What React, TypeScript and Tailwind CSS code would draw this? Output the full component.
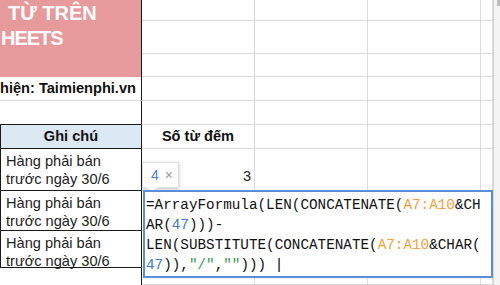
import React from "react";

const G = "border-[#dadada]";

function Cell({ className = "", children }: { className?: string; children?: React.ReactNode }) {
  return <div className={`border-r border-b ${G} ${className}`}>{children}</div>;
}

export default function App() {
  const cells: React.ReactNode[] = [];
  cells.push(
    <div key="pink" className="row-span-3 bg-[#e79a9b] border-r border-r-[#1a1a1a] overflow-hidden text-white font-bold text-[20px] leading-[25px]">
      <div className="pl-[8px] pt-[1px] whitespace-nowrap">TỪ TRÊN</div>
      <div className="pl-[1px] whitespace-nowrap tracking-[-1px]">HEETS</div>
    </div>
  );
  for (let i = 0; i < 4; i++) cells.push(<Cell key={`r1c${i}`} />);
  cells.push(
    <div key="scroll" className="row-span-10 bg-[#f4f4f4] border-l border-[#d6d6d6] flex flex-col">
      <div className="h-[6px] bg-[#bdbdbd] ml-[3px]" />
    </div>
  );
  for (let r = 2; r <= 3; r++) for (let i = 0; i < 4; i++) cells.push(<Cell key={`r${r}c${i}`} />);
  cells.push(
    <div key="r4c0" className={`border-b ${G} border-r border-r-[#1a1a1a] flex items-center overflow-hidden`}>
      <span className="font-bold text-[14.6px] whitespace-nowrap text-[#111]">hiện: Taimienphi.vn</span>
    </div>
  );
  for (let i = 0; i < 4; i++) cells.push(<Cell key={`r4c${i + 1}`} />);
  cells.push(<div key="r5c0" className="border-b border-r border-[#1a1a1a]" />);
  for (let i = 0; i < 4; i++) cells.push(<Cell key={`r5c${i + 1}`} />);
  cells.push(
    <div key="r6c0" className="bg-[#dde8f5] border-l border-b border-r border-[#1a1a1a] flex items-center justify-center font-bold text-[14.6px] text-[#111]">
      Ghi chú
    </div>
  );
  cells.push(
    <Cell key="r6c1" className="flex items-center justify-center font-bold text-[14.6px] text-[#111]">
      Số từ đếm
    </Cell>
  );
  for (let i = 0; i < 3; i++) cells.push(<Cell key={`r6c${i + 2}`} />);
  for (let r = 7; r <= 9; r++) {
    cells.push(
      <div key={`r${r}c0`} className="border-l border-b border-r border-[#1a1a1a] pl-[5px] pt-[3px] text-[14.6px] leading-[18px] text-[#222]">
        <div>Hàng phải bán</div>
        <div>trước ngày 30/6</div>
      </div>
    );
    cells.push(
      <Cell key={`r${r}c1`} className="flex items-end justify-end pr-[3px] pb-[2px] text-[14.6px] text-[#222]">
        {r === 7 ? "3" : ""}
      </Cell>
    );
    for (let i = 0; i < 3; i++) cells.push(<Cell key={`r${r}c${i + 2}`} />);
  }
  cells.push(<div key="r10c0" className="border-r border-[#1a1a1a]" />);
  for (let i = 0; i < 4; i++) cells.push(<Cell key={`r10c${i + 1}`} />);

  const O = "text-[#eea23c]";
  const B = "text-[#3b78c9]";
  const Gr = "text-[#3a9a5b]";

  return (
    <div className="relative w-[500px] h-[285px] overflow-hidden bg-white font-['Liberation_Sans',Arial,sans-serif]">
      <div className="grid grid-cols-[142px_113px_113px_113px_12px_7px] grid-rows-[21px_33px_23px_24px_24px_24px_42px_40px_37px_17px] h-[285px]">
        {cells}
      </div>

      <div className="absolute left-[142px] top-[162px] w-[37px] h-[26px] bg-white border border-[#e0e0e0] shadow-[0_1px_3px_rgba(0,0,0,0.25)] flex items-center pl-[8px] gap-[6px] text-[14px]">
        <span className="text-[#4a80d0]">4</span>
        <span className="text-[#9a9a9a]">×</span>
        <div className="absolute left-[5px] bottom-[-5px] w-[8px] h-[8px] bg-white border-r border-b border-[#e0e0e0] rotate-45" />
      </div>

      <div className="absolute left-[143px] top-[190px] w-[350px] h-[88px] bg-white border-2 border-[#5b8dd9] pl-[1px] pt-[3px] font-['Liberation_Mono',monospace] text-[14.3px] leading-[20px] text-[#111] whitespace-pre">
        <div>
          =ArrayFormula(LEN(CONCATENATE(<span className={O}>A7:A10</span>&amp;CH
        </div>
        <div>
          AR(<span className={B}>47</span>)))-
        </div>
        <div>
          LEN(SUBSTITUTE(CONCATENATE(<span className={O}>A7:A10</span>&amp;CHAR(
        </div>
        <div>
          <span className={B}>47</span>)),<span className={Gr}>"/"</span>,<span className={Gr}>""</span>))) <span className="text-black">|</span>
        </div>
      </div>
    </div>
  );
}
